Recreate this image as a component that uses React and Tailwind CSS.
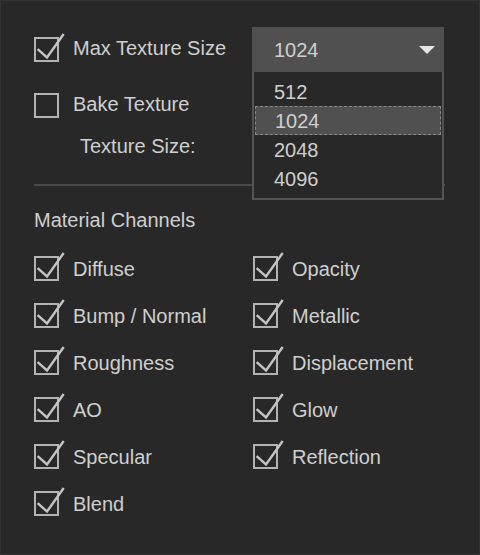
import React from "react";

function Check({ checked }) {
  return (
    <div className="relative w-[25px] h-[25px] shrink-0">
      <div className="w-[25px] h-[25px] border-2 border-[#b3b3b3]" />
      {checked && (
        <svg
          className="absolute left-0 top-[-4px] overflow-visible"
          width="32"
          height="30"
          viewBox="0 0 32 30"
        >
          <path
            d="M4.5 17 L13 24.5 L29 2"
            fill="none"
            stroke="#c4c4c4"
            strokeWidth="2.4"
            strokeLinecap="square"
          />
        </svg>
      )}
    </div>
  );
}

function Item({ label, checked = true }) {
  return (
    <div className="flex items-center h-[47px] gap-[14px]">
      <Check checked={checked} />
      <span className="leading-none">{label}</span>
    </div>
  );
}

export default function App() {
  const left = ["Diffuse", "Bump / Normal", "Roughness", "AO", "Specular", "Blend"];
  const right = ["Opacity", "Metallic", "Displacement", "Glow", "Reflection"];
  return (
    <div
      className="w-[480px] h-[555px] bg-[#282828] border border-[#333333] pl-[33px] pt-[26px] text-[#cfcfcf] text-[20px] box-border"
      style={{ fontFamily: '"Liberation Sans", Arial, sans-serif' }}
    >
      <div className="flex items-center h-[45px]">
        <div className="w-[218px] flex items-center gap-[14px]">
          <Check checked />
          <span className="leading-none -translate-y-[2px]">Max Texture Size</span>
        </div>
        <div className="relative w-[192px] h-[45px]">
          <div className="w-full h-full bg-[#505050] flex items-center justify-between pl-[22px] pr-[9px]">
            <span className="leading-none">1024</span>
            <svg width="16" height="8" viewBox="0 0 16 8">
              <path d="M0 0 H16 L8 8 Z" fill="#e6e6e6" />
            </svg>
          </div>
          <div className="absolute left-0 top-[45px] w-[192px] h-[128px] bg-[#282828] border-2 border-t-0 border-[#545454] pt-[5px] px-[1px] z-10">
            {["512", "1024", "2048", "4096"].map((v, i) => (
              <div
                key={v}
                className={
                  "h-[29px] flex items-center pl-[19px] leading-none " +
                  (i === 1
                    ? "bg-[#505050] border border-dashed border-[#8a8a8a]"
                    : "")
                }
              >
                {v}
              </div>
            ))}
          </div>
        </div>
      </div>

      <div className="flex items-center h-[44px] mt-[11px] gap-[14px]">
        <Check checked={false} />
        <span className="leading-none -translate-y-[1px]">Bake Texture</span>
      </div>

      <div className="h-[28px] mt-[5px] pl-[46px] flex items-center leading-none">
        Texture Size:
      </div>

      <div className="mt-[24px] h-[2px] w-[411px] bg-[#4a4a4a]" />

      <div className="mt-[20px] h-[28px] flex items-center leading-none">
        Material Channels
      </div>

      <div className="mt-[11px] grid grid-cols-[219px_1fr]">
        <div className="flex flex-col">
          {left.map((l) => (
            <Item key={l} label={l} />
          ))}
        </div>
        <div className="flex flex-col">
          {right.map((l) => (
            <Item key={l} label={l} />
          ))}
        </div>
      </div>
    </div>
  );
}
